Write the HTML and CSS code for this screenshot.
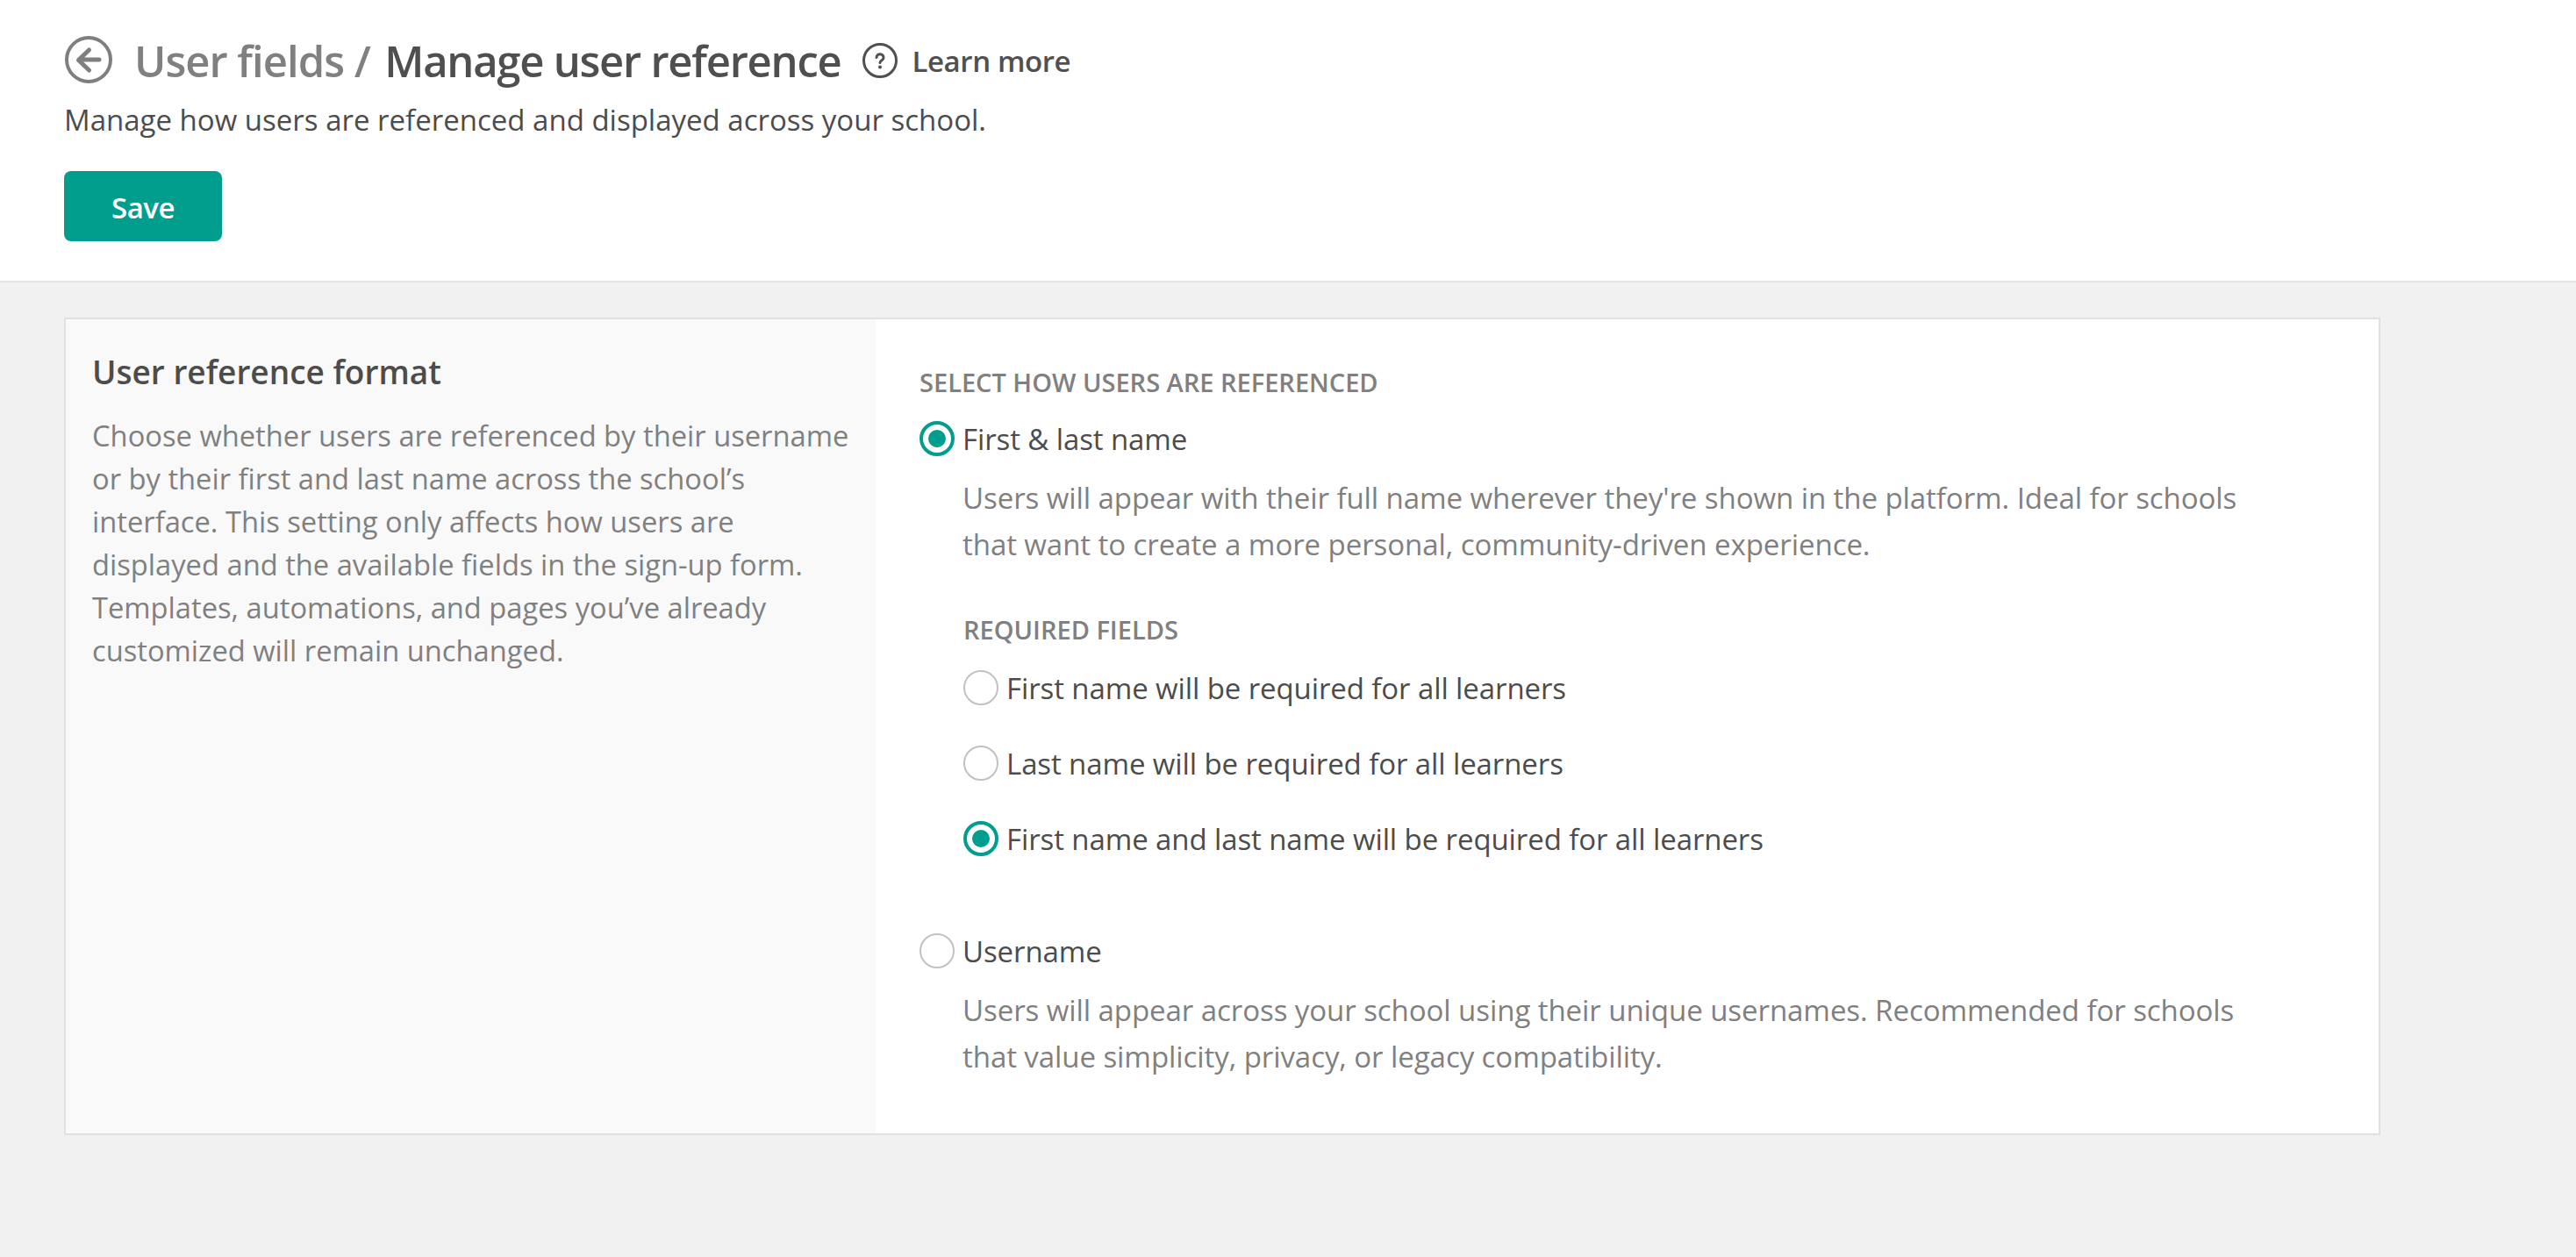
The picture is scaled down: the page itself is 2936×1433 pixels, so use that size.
FILE: index.html
```html
<!DOCTYPE html>
<html lang="en">
<head>
<meta charset="utf-8">
<title>Manage user reference</title>
<link rel="stylesheet" href="styles.css">
</head>
<body>
<header class="page-header">
  <div class="title-row">
    <a class="back" href="#" aria-label="Back">
      <svg viewBox="0 0 56 56" width="56" height="56" fill="none" stroke="#7f7f7f" stroke-linecap="round" stroke-linejoin="round"><circle cx="28" cy="27" r="25" stroke-width="4"/><path d="M40 27H17M28.500 16 16.500 27.500l12 11.500" stroke-width="5"/></svg>
    </a>
    <h1 class="title"><span class="crumb">User fields /</span> Manage user reference</h1>
    <a class="learn" href="#">
      <svg viewBox="0 0 40 40" width="40" height="40" fill="none"><circle cx="20" cy="20" r="18.500" stroke="#505050" stroke-width="3"/><path d="M16 16.500a4 4 0 0 1 8 .5c0 2.600-4 3-4 5.500" stroke="#505050" stroke-width="3" stroke-linecap="round"/><circle cx="20" cy="27.500" r="2" fill="#505050"/></svg>
      <span>Learn more</span>
    </a>
  </div>
  <p class="subtitle">Manage how users are referenced and displayed across your school.</p>
  <button class="save" type="button">Save</button>
</header>
<main class="content">
  <section class="card">
    <aside class="side">
      <h2 class="side-title">User reference format</h2>
      <p class="side-text">Choose whether users are referenced by their username or by their first and last name across the school’s interface. This setting only affects how users are displayed and the available fields in the sign-up form. Templates, automations, and pages you’ve already customized will remain unchanged.</p>
    </aside>
    <div class="form">
      <div class="label first-label">SELECT HOW USERS ARE REFERENCED</div>
      <div class="option">
        <span class="radio on"></span><span class="option-text">First &amp; last name</span>
      </div>
      <p class="help">Users will appear with their full name wherever they're shown in the platform. Ideal for schools that want to create a more personal, community-driven experience.</p>
      <div class="nested">
        <div class="label">REQUIRED FIELDS</div>
        <div class="option sub"><span class="radio"></span><span class="option-text">First name will be required for all learners</span></div>
        <div class="option sub"><span class="radio"></span><span class="option-text">Last name will be required for all learners</span></div>
        <div class="option sub"><span class="radio on"></span><span class="option-text">First name and last name will be required for all learners</span></div>
      </div>
      <div class="option username">
        <span class="radio"></span><span class="option-text">Username</span>
      </div>
      <p class="help">Users will appear across your school using their unique usernames. Recommended for schools that value simplicity, privacy, or legacy compatibility.</p>
    </div>
  </section>
</main>
</body>
</html>
```

FILE: styles.css
```css
* { box-sizing: border-box; }
html, body { margin: 0; height: 100%; }
body {
  background: #f1f1f1;
  font-family: "Open Sans", "Noto Sans", sans-serif;
  color: #4c4c4c;
  display: flex;
  flex-direction: column;
}
.page-header {
  background: #fff;
  height: 322px;
  padding: 40px 73px 0;
  border-bottom: 2px solid #e4e4e4;
}
.title-row { display: flex; align-items: center; height: 58px; }
.back { display: flex; margin-right: 24px; }
.title { margin: 0; font-size: 49px; font-weight: 600; color: #4f4f4f; letter-spacing: -1.27px; line-height: 58px; }
.crumb { color: #808080; letter-spacing: -1px; margin-right: 5px; }
.learn { display: flex; align-items: center; margin-left: 25px; color: #505050; text-decoration: none; font-size: 33px; font-weight: 600; letter-spacing: -0.4px; }
.learn span { margin-left: 16px; }
.subtitle { margin: 18px 0 0; font-size: 33px; line-height: 42px; color: #4c4c4c; }
.save {
  display: block;
  margin-top: 37px;
  width: 180px;
  height: 80px;
  padding: 2px 0 0;
  background: #029e8d;
  border: 0;
  border-radius: 8px;
  color: #fff;
  font: 600 33px "Open Sans", sans-serif;
  letter-spacing: -0.5px;
}
.content { flex: 1; padding: 40px 73px 0; }
.card {
  width: 2640px;
  height: 932px;
  display: flex;
  background: #fff;
  border: 2px solid #e1e1e1;
}
.side { width: 923px; background: #f9f9f9; padding: 35px 24px 0 30px; flex: none; }
.side-title { margin: 0; font-size: 37px; font-weight: 600; line-height: 50px; color: #4c4c4c; }
.side-text { margin: 23px 0 0; font-size: 32.7px; line-height: 49px; color: #808080; }
.form { flex: 1; padding: 54px 50px 0; }
.label { font-size: 29px; font-weight: 600; line-height: 36px; color: #808080; }
.option { display: flex; align-items: center; height: 40px; margin-top: 26px; }
.option-text { margin-left: 9px; font-size: 33px; letter-spacing: -0.1px; color: #4c4c4c; white-space: nowrap; }
.radio { width: 40px; height: 40px; border-radius: 50%; border: 2px solid #c2c2c2; background: #fff; flex: none; }
.radio.on { border: 4px solid #029e8d; background: #029e8d; background-clip: content-box; padding: 6px; }
.help { margin: 22px 0 0 49px; width: 1480px; font-size: 33.1px; line-height: 52.5px; letter-spacing: -0.1px; color: #808080; }
.nested { margin: 53px 0 0 50px; }
.sub { height: 58px; margin-top: 28px; }
.label + .sub { margin-top: 19px; }
.username { margin-top: 79px; }
```
